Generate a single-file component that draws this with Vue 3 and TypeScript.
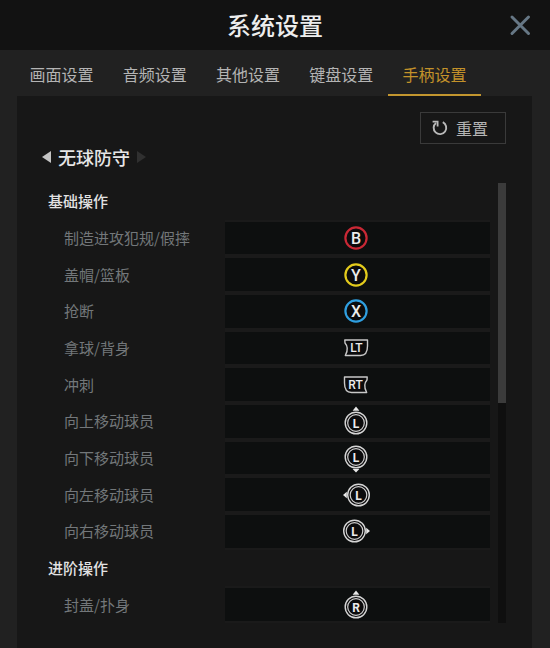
<script setup lang="ts">
import { computed, ref } from 'vue'

type Direction = 'up' | 'down' | 'left' | 'right'

interface FaceInput { kind: 'face'; label: string; color: string }
interface TriggerInput { kind: 'trigger'; label: string; side: 'left' | 'right' }
interface StickInput { kind: 'stick'; label: string; direction: Direction }
type PadInput = FaceInput | TriggerInput | StickInput

interface Binding { action: string; input: PadInput }
interface BindingGroup { title: string; bindings: Binding[] }

const tabs: string[] = ['画面设置', '音频设置', '其他设置', '键盘设置', '手柄设置']
const activeTab = ref('手柄设置')

const modes: string[] = ['无球防守']
const modeIndex = ref(0)
const mode = computed(() => modes[modeIndex.value])

function stepMode(step: number): void {
  modeIndex.value = Math.min(modes.length - 1, Math.max(0, modeIndex.value + step))
}

const groups: BindingGroup[] = [
  {
    title: '基础操作',
    bindings: [
      { action: '制造进攻犯规/假摔', input: { kind: 'face', label: 'B', color: '#c92835' } },
      { action: '盖帽/篮板', input: { kind: 'face', label: 'Y', color: '#e3cb1c' } },
      { action: '抢断', input: { kind: 'face', label: 'X', color: '#2f9fe0' } },
      { action: '拿球/背身', input: { kind: 'trigger', label: 'LT', side: 'left' } },
      { action: '冲刺', input: { kind: 'trigger', label: 'RT', side: 'right' } },
      { action: '向上移动球员', input: { kind: 'stick', label: 'L', direction: 'up' } },
      { action: '向下移动球员', input: { kind: 'stick', label: 'L', direction: 'down' } },
      { action: '向左移动球员', input: { kind: 'stick', label: 'L', direction: 'left' } },
      { action: '向右移动球员', input: { kind: 'stick', label: 'L', direction: 'right' } },
    ],
  },
  {
    title: '进阶操作',
    bindings: [
      { action: '封盖/扑身', input: { kind: 'stick', label: 'R', direction: 'up' } },
    ],
  },
]

const stickCenter: Record<Direction, { x: number; y: number }> = {
  up: { x: 16, y: 18 },
  down: { x: 16, y: 15 },
  left: { x: 18.5, y: 16 },
  right: { x: 14.5, y: 16 },
}

const stickArrow: Record<Direction, string> = {
  up: 'M16 1.4 L19.4 5.8 H12.6 Z',
  down: 'M16 30.6 L19.4 27 H12.6 Z',
  left: 'M3 16 L6.8 12.8 V19.2 Z',
  right: 'M30 16 L26.2 12.8 V19.2 Z',
}

const triggerShape = {
  left: 'M4.8 8 H27.5 V14 Q27.5 23.5 20.5 23.5 H5.3 Q7.6 19.5 7.2 16 Q6.8 13 5 11 Z',
  right: 'M27.2 8 H4.5 V14 Q4.5 23.5 11.5 23.5 H26.7 Q24.4 19.5 24.8 16 Q25.2 13 27 11 Z',
}
</script>

<template>
  <div class="settings">
    <header class="header">
      <h1 class="title">系统设置</h1>
      <button class="close" type="button" aria-label="关闭">
        <svg width="22" height="22" viewBox="0 0 22 22" aria-hidden="true">
          <path d="M3 3 L19.5 19.5 M19.5 3 L3 19.5" fill="none" stroke="#667785" stroke-width="3" stroke-linecap="round" />
        </svg>
      </button>
    </header>

    <nav class="tabs">
      <button
        v-for="tab in tabs"
        :key="tab"
        type="button"
        class="tab"
        :class="{ active: tab === activeTab }"
        @click="activeTab = tab"
      >{{ tab }}</button>
    </nav>

    <main class="panel">
      <button class="reset" type="button">
        <svg width="16" height="16" viewBox="0 0 16 16" aria-hidden="true">
          <path d="M10.8 2.2 A6.3 6.3 0 1 1 4 2.9" fill="none" stroke="#b9b9b9" stroke-width="1.9" />
          <path d="M0.6 1.6 H5.6 V6.4" fill="none" stroke="#b9b9b9" stroke-width="1.8" />
        </svg>
        <span>重置</span>
      </button>

      <div class="mode">
        <button class="step" type="button" aria-label="上一个" @click="stepMode(-1)">
          <svg width="9" height="12" viewBox="0 0 9 12" aria-hidden="true"><path d="M9 0 V12 L0 6 Z" fill="#c4c4c4" /></svg>
        </button>
        <h2 class="mode-name">{{ mode }}</h2>
        <button class="step" type="button" aria-label="下一个" @click="stepMode(1)">
          <svg width="9" height="12" viewBox="0 0 9 12" aria-hidden="true"><path d="M0 0 V12 L9 6 Z" fill="#303030" /></svg>
        </button>
      </div>

      <div class="viewport">
        <table class="bindings">
          <tbody v-for="group in groups" :key="group.title">
            <tr>
              <th class="group-title" colspan="2" scope="rowgroup">{{ group.title }}</th>
            </tr>
            <tr v-for="binding in group.bindings" :key="binding.action">
              <th class="action" scope="row">{{ binding.action }}</th>
              <td class="key">
                <svg class="pad" width="32" height="32" viewBox="0 0 32 32">
                  <template v-if="binding.input.kind === 'face'">
                    <circle cx="16" cy="16" r="10.6" fill="#0b0b0c" :stroke="binding.input.color" stroke-width="2.2" />
                    <text class="face-label" x="16" y="21.7">{{ binding.input.label }}</text>
                  </template>
                  <template v-else-if="binding.input.kind === 'trigger'">
                    <path :d="triggerShape[binding.input.side]" fill="#0b0b0c" stroke="#c8c8c8" stroke-width="1.4" stroke-linejoin="round" />
                    <text class="trigger-label" :x="binding.input.side === 'left' ? 16.5 : 15.5" y="20">{{ binding.input.label }}</text>
                  </template>
                  <template v-else>
                    <circle :cx="stickCenter[binding.input.direction].x" :cy="stickCenter[binding.input.direction].y" r="10.8" fill="#0b0b0c" stroke="#d6d6d6" stroke-width="1.4" />
                    <circle :cx="stickCenter[binding.input.direction].x" :cy="stickCenter[binding.input.direction].y" r="8.3" fill="none" stroke="#cfcfcf" stroke-width="1.2" />
                    <path :d="stickArrow[binding.input.direction]" fill="#e8e8e8" />
                    <text class="stick-label" :x="stickCenter[binding.input.direction].x" :y="stickCenter[binding.input.direction].y + 4.5">{{ binding.input.label }}</text>
                  </template>
                </svg>
              </td>
            </tr>
          </tbody>
        </table>
        <div class="scrollbar"><div class="thumb"></div></div>
      </div>
    </main>
  </div>
</template>

<style>
body {
  margin: 0;
  background: #212121;
}
</style>

<style scoped>
.settings {
  display: flex;
  flex-direction: column;
  box-sizing: border-box;
  min-height: 100vh;
  background: #212121;
  color: #b4b4b4;
  font-family: "Noto Sans CJK SC", sans-serif;
  font-size: 16px;
}

button {
  padding: 0;
  border: 0;
  background: none;
  color: inherit;
  font: inherit;
  cursor: pointer;
}

svg {
  display: block;
}

.header {
  display: grid;
  grid-template-columns: 1fr auto 1fr;
  align-items: center;
  height: 50px;
  padding: 0 19px;
  background: #121212;
}

.title {
  grid-column: 2;
  margin: 0;
  color: #ededed;
  font-size: 24px;
  font-weight: 500;
  line-height: 32px;
}

.close {
  justify-self: end;
}

.tabs {
  display: flex;
  height: 46px;
  padding: 0 69px 0 15px;
}

.tab {
  flex: 1;
  padding-top: 2px;
  border-top: 2px solid transparent;
  border-bottom: 2px solid transparent;
  line-height: 24px;
  white-space: nowrap;
}

.tab.active {
  border-bottom-color: #c3962f;
  color: #c3922a;
}

.panel {
  display: flex;
  flex: 1;
  flex-direction: column;
  margin: 0 18px 0 17px;
  padding: 16px 26px 25px 25px;
  background: #171717;
}

.reset {
  display: flex;
  align-items: center;
  align-self: flex-end;
  gap: 8px;
  box-sizing: border-box;
  width: 86px;
  height: 32px;
  padding-left: 11px;
  border: 1px solid #3a3a3a;
}

.mode {
  display: flex;
  align-items: center;
  gap: 7px;
  height: 24px;
  margin: 1px 0 14px;
}

.mode-name {
  margin: 0;
  color: #e6e6e6;
  font-size: 18px;
  font-weight: 500;
  line-height: 24px;
}

.viewport {
  display: flex;
  gap: 8px;
  padding-left: 6px;
}

.bindings {
  flex: 1;
  height: 440px;
  border-spacing: 0;
  table-layout: fixed;
}

.bindings tr {
  height: 36px;
}

.bindings th,
.bindings td {
  padding: 0;
  text-align: left;
  line-height: 24px;
}

.bindings .group-title {
  color: #e2e2e2;
  font-size: 15px;
  font-weight: 500;
}

.bindings .action {
  padding-left: 16px;
  color: #73777a;
  font-size: 15px;
  font-weight: 400;
}

.bindings .key {
  width: 60%;
  padding-right: 2px;
  border-top: 2px solid #1a1a1a;
  border-bottom: 2px solid #1a1a1a;
  background: #0d0f0f;
}

.pad {
  margin: 0 auto;
}

.pad text {
  fill: #ececec;
  font-family: Roboto, sans-serif;
  text-anchor: middle;
}

.face-label {
  font-size: 16px;
  font-weight: 500;
}

.trigger-label {
  font-size: 12px;
  font-weight: 500;
}

.stick-label {
  font-size: 12px;
  font-weight: 700;
}

.scrollbar {
  width: 8px;
  background: #0f0f0f;
}

.thumb {
  height: 50%;
  background: #3b3b3b;
}
</style>
